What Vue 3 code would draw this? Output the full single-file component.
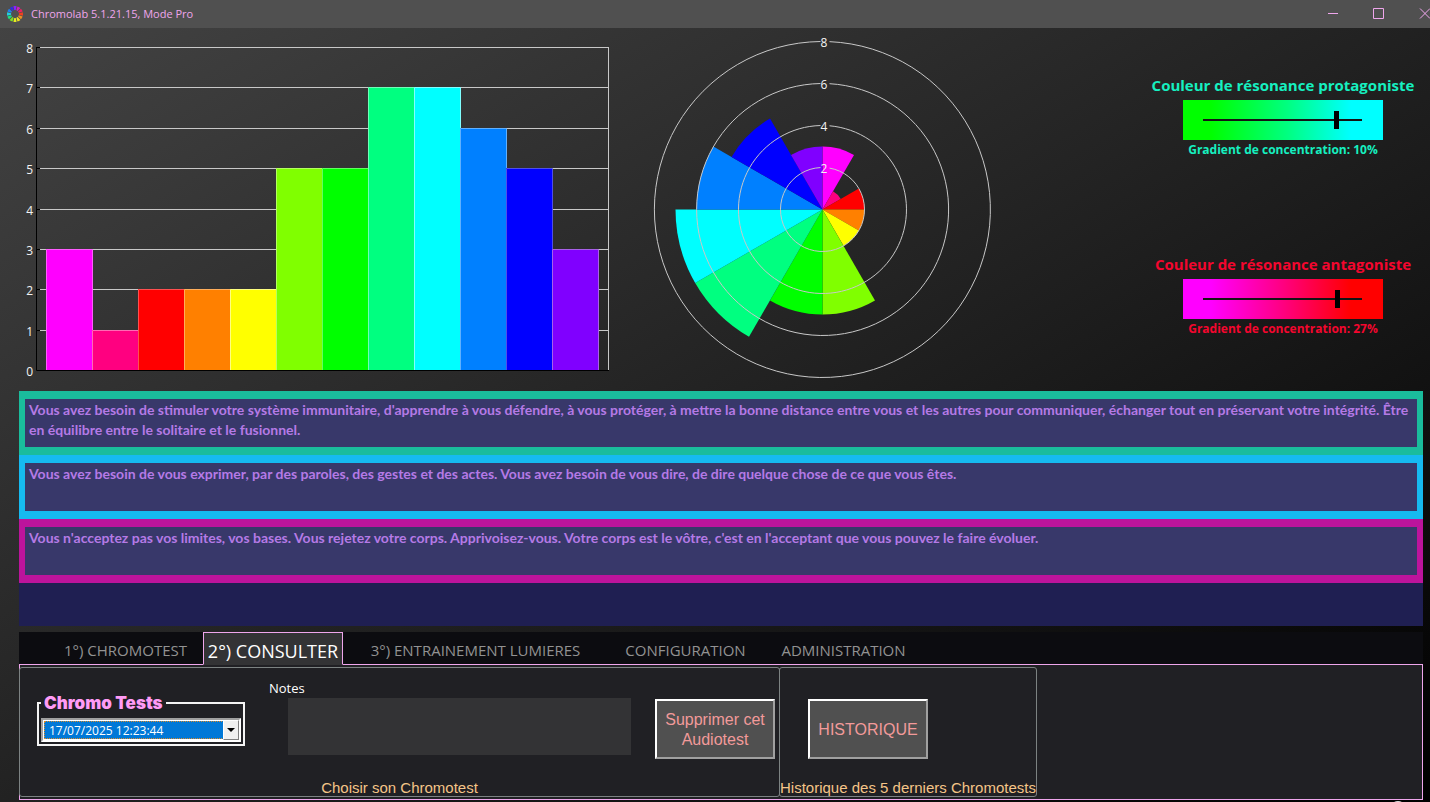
<script setup>
import { ref } from 'vue'

const series = [
  { value: 3, color: '#ff00ff', edge: '#ff5cff' },
  { value: 1, color: '#ff0080', edge: '#ff6ab4' },
  { value: 2, color: '#ff0000', edge: '#ff5050' },
  { value: 2, color: '#ff8000', edge: '#ffae5c' },
  { value: 2, color: '#ffff00', edge: '#ffff80' },
  { value: 5, color: '#80ff00', edge: '#b4ff60' },
  { value: 5, color: '#00ff00', edge: '#60ff60' },
  { value: 7, color: '#00ff80', edge: '#70ffb8' },
  { value: 7, color: '#00ffff', edge: '#80ffff' },
  { value: 6, color: '#0080ff', edge: '#60b0ff' },
  { value: 5, color: '#0000ff', edge: '#5050e8' },
  { value: 3, color: '#8000ff', edge: '#a860e8' },
]

const levels = [0, 1, 2, 3, 4, 5, 6, 7, 8]
const levelY = (v) => Math.round(342 - v * 40.375) + 0.5
const barWidth = 46
const bars = series.map((s, i) => ({
  ...s,
  x: 46 + i * barWidth,
  y: levelY(s.value),
  height: 342 - levelY(s.value),
}))

const cx = 182.5
const cy = 181.5
const unit = 21
const point = (radius, degrees, x = cx, y = cy) => {
  const a = (degrees * Math.PI) / 180
  return `${(x + radius * Math.sin(a)).toFixed(2)} ${(y - radius * Math.cos(a)).toFixed(2)}`
}
const sectors = series.map((s, i) => {
  const r = s.value * unit
  return {
    color: s.color,
    d: `M${cx} ${cy}L${point(r, i * 30)}A${r} ${r} 0 0 1 ${point(r, i * 30 + 30)}Z`,
  }
})
const rings = [2, 4, 6, 8].map((v) => {
  const r = v * unit
  const start = (Math.asin(7 / r) * 180) / Math.PI
  const end = 360 - (Math.asin(2 / r) * 180) / Math.PI
  return { v, y: cy - r, d: `M${point(r, start)}A${r} ${r} 0 1 1 ${point(r, end)}` }
})

const logoColors = ['#8a20ff', '#d020c0', '#f02060', '#f04020', '#f09020', '#f0e020', '#e8f020', '#80e020', '#20e080', '#20d0e0', '#2080f0', '#3030e0']
const logo = logoColors.map((color, i) => ({
  color,
  d: `M${point(8, i * 30 - 12, 8, 8)}A8 8 0 0 1 ${point(8, i * 30 + 12, 8, 8)}L${point(4, i * 30 + 10, 8, 8)}L${point(4, i * 30 - 10, 8, 8)}Z`,
}))

const resonances = ref([
  { id: 'protagoniste', title: 'Couleur de résonance protagoniste', position: 85, percent: 10 },
  { id: 'antagoniste', title: 'Couleur de résonance antagoniste', position: 86, percent: 27 },
])

const messages = [
  { tone: 'green', text: "Vous avez besoin de stimuler votre système immunitaire, d'apprendre à vous défendre, à vous protéger, à mettre la bonne distance entre vous et les autres pour communiquer, échanger tout en préservant votre intégrité. Être en équilibre entre le solitaire et le fusionnel." },
  { tone: 'blue', text: 'Vous avez besoin de vous exprimer, par des paroles, des gestes et des actes. Vous avez besoin de vous dire, de dire quelque chose de ce que vous êtes.' },
  { tone: 'pink', text: "Vous n'acceptez pas vos limites, vos bases. Vous rejetez votre corps. Apprivoisez-vous. Votre corps est le vôtre, c'est en l'acceptant que vous pouvez le faire évoluer." },
]

const tabs = [
  { id: 'test', label: '1°) CHROMOTEST' },
  { id: 'consult', label: '2°) CONSULTER' },
  { id: 'training', label: '3°) ENTRAINEMENT LUMIERES' },
  { id: 'config', label: 'CONFIGURATION' },
  { id: 'admin', label: 'ADMINISTRATION' },
]
const activeTab = ref('consult')
const notes = ref('')
const selectedTest = ref('17/07/2025 12:23:44')
</script>

<template>
  <div class="window">
    <header class="titlebar">
      <svg class="logo" viewBox="0 0 16 16" aria-hidden="true">
        <path v-for="(piece, i) in logo" :key="i" :d="piece.d" :fill="piece.color" />
      </svg>
      <h1>Chromolab 5.1.21.15, Mode Pro</h1>
      <div class="controls">
        <button type="button" aria-label="Réduire">
          <svg viewBox="0 0 12 12"><path d="M1 5.500H11" /></svg>
        </button>
        <button type="button" aria-label="Agrandir">
          <svg viewBox="0 0 12 12"><path d="M0.500 0.500H10.500V10.500H0.500Z" /></svg>
        </button>
        <button type="button" aria-label="Fermer">
          <svg viewBox="0 0 12 12"><path d="M1 0.500L11 10.500M11 0.500L1 10.500" /></svg>
        </button>
      </div>
    </header>

    <section class="charts">
      <svg class="chart" viewBox="0 0 640 363" role="img" aria-label="Histogramme des couleurs">
        <path v-for="v in levels.slice(1)" :key="v" class="grid" :d="`M40 ${levelY(v)}H608`" />
        <path class="grid" d="M608.5 19V342" />
        <g v-for="(bar, i) in bars" :key="i">
          <rect :x="bar.x" :y="bar.y - 0.5" :width="barWidth" :height="bar.height + 0.5" :fill="bar.color" />
          <path :d="`M${bar.x + 0.5} 342V${bar.y}H${bar.x + barWidth + 0.5}V342`" fill="none" :stroke="bar.edge" />
        </g>
        <path class="axis" d="M36.5 19V342.500H609" />
        <path v-for="v in levels" :key="`t${v}`" class="axis" :d="`M37 ${levelY(v)}H40`" />
        <text v-for="v in levels" :key="`l${v}`" class="tick" x="33" :y="levelY(v) + 5" text-anchor="end">{{ v }}</text>
      </svg>

      <svg class="chart" viewBox="0 0 496 363" role="img" aria-label="Diagramme polaire des couleurs">
        <path v-for="(sector, i) in sectors" :key="i" :d="sector.d" :fill="sector.color" />
        <g v-for="ring in rings" :key="ring.v">
          <path class="ring" :d="ring.d" />
          <text class="tick" x="184" :y="ring.y + 5" text-anchor="middle">{{ ring.v }}</text>
        </g>
      </svg>

      <div class="resonances">
        <div v-for="r in resonances" :key="r.id" class="resonance" :class="r.id">
          <label :for="r.id">{{ r.title }}</label>
          <div class="gradient">
            <input :id="r.id" v-model="r.position" type="range" min="0" max="100" />
          </div>
          <p>Gradient de concentration: {{ r.percent }}%</p>
        </div>
      </div>
    </section>

    <section class="messages">
      <p v-for="m in messages" :key="m.tone" :class="m.tone">{{ m.text }}</p>
    </section>

    <nav class="tabs" role="tablist">
      <button
        v-for="tab in tabs"
        :key="tab.id"
        type="button"
        role="tab"
        :class="[tab.id, { active: activeTab === tab.id }]"
        :aria-selected="activeTab === tab.id"
        @click="activeTab = tab.id"
      >{{ tab.label }}</button>
    </nav>

    <main class="panel">
      <section class="group choose">
        <div class="tools">
          <fieldset>
            <legend>Chromo Tests</legend>
            <div class="combo">
              <select v-model="selectedTest" aria-label="Chromo Tests">
                <option>17/07/2025 12:23:44</option>
              </select>
              <span class="drop" aria-hidden="true"><svg viewBox="0 0 8 4"><path d="M0 0H8L4 4Z" /></svg></span>
            </div>
          </fieldset>
          <div class="notes">
            <label for="notes">Notes</label>
            <textarea id="notes" v-model="notes"></textarea>
          </div>
          <button type="button" class="action">Supprimer cet Audiotest</button>
        </div>
        <h2>Choisir son Chromotest</h2>
      </section>
      <section class="group history">
        <div class="tools">
          <button type="button" class="action">HISTORIQUE</button>
        </div>
        <h2>Historique des 5 derniers Chromotests</h2>
      </section>
    </main>
    <span class="knob" aria-hidden="true"></span>
  </div>
</template>

<style>
body {
  margin: 0;
  background: #000;
}
</style>

<style scoped>
* {
  box-sizing: border-box;
}
h1, h2, p {
  margin: 0;
  font-weight: 400;
}
.window {
  position: relative;
  display: flex;
  flex-direction: column;
  min-height: 100vh;
  overflow: hidden;
  background: linear-gradient(to bottom right, #444 0%, #000 100%);
  font-family: "Open Sans", "Noto Sans", sans-serif;
  color: #fff;
}
button {
  cursor: pointer;
}
.titlebar {
  display: flex;
  align-items: center;
  height: 28px;
  padding-left: 7px;
  background: #505050;
  color: #efa6ec;
}
.logo {
  width: 16px;
  height: 16px;
}
.titlebar h1 {
  flex: 1;
  margin-left: 8px;
  font-size: 11px;
  line-height: 16px;
}
.controls {
  display: flex;
  margin-right: -18px;
}
.controls button {
  width: 46px;
  height: 28px;
  padding: 0;
  border: 0;
  background: none;
}
.controls svg {
  display: block;
  width: 12px;
  height: 12px;
  margin: 0 auto;
  fill: none;
  stroke: #efa6ec;
}
.charts {
  display: grid;
  grid-template-columns: 640fr 496fr 294px;
}
.chart {
  display: block;
  width: 100%;
}
.grid, .ring {
  fill: none;
  stroke: #c8c8c8;
}
.axis {
  fill: none;
  stroke: #000;
}
.tick {
  fill: #f4f4f4;
  font-size: 12px;
}
.resonances {
  display: flex;
  flex-direction: column;
  gap: 92px;
  padding-top: 45px;
}
.resonance {
  display: flex;
  flex-direction: column;
  align-items: center;
  font-weight: 700;
}
.resonance label {
  font-size: 15px;
  line-height: 24px;
  white-space: nowrap;
}
.resonance p {
  font-size: 12px;
  line-height: 20px;
  font-weight: 700;
}
.resonance.protagoniste {
  color: #16f0c0;
}
.resonance.antagoniste {
  color: #f4062e;
}
.gradient {
  display: flex;
  align-items: center;
  width: 200px;
  height: 40px;
  margin-top: 3px;
  padding: 0 21px 0 20px;
}
.protagoniste .gradient {
  background: linear-gradient(to right, #0f0 14%, #00ff80 52%, #0ff 84%);
}
.antagoniste .gradient {
  background: linear-gradient(to right, #f0f 14%, #ff0080 50%, #f00 84%);
}
.gradient input {
  appearance: none;
  width: 100%;
  height: 18px;
  margin: 0;
  background: linear-gradient(#141414, #141414) center / 100% 2px no-repeat;
}
.gradient input::-webkit-slider-thumb {
  appearance: none;
  width: 5px;
  height: 18px;
  background: #000;
}
.messages {
  min-height: 235px;
  margin: 0 7px 6px 19px;
  background: #1f1f52;
}
.messages p {
  min-height: 64px;
  padding: 1px 4px;
  border: solid;
  border-width: 8px 6px;
  background: #38386a;
  color: #b57ae6;
  font-family: Lato, sans-serif;
  font-size: 14px;
  font-weight: 700;
  line-height: 20px;
}
.messages .green {
  border-color: #1abc9c;
}
.messages .blue {
  border-color: #16baf0;
}
.messages .pink {
  border-color: #bc149c;
}
.tabs {
  display: flex;
  position: relative;
  z-index: 1;
  height: 33px;
  margin: 0 7px -1px 19px;
  padding-left: 29px;
  background: #0c0c10;
}
.tabs button {
  padding: 4px 0 0;
  border: 0;
  background: none;
  color: #929292;
  font-family: "Open Sans", sans-serif;
  font-size: 15px;
  white-space: nowrap;
  border-bottom: 1px solid #efa6ec;
}
.tabs::before {
  content: "";
  width: 29px;
  margin-left: -29px;
  border-bottom: 1px solid #efa6ec;
}
.tabs::after {
  content: "";
  flex: 1;
  border-bottom: 1px solid #efa6ec;
}
.tabs .test {
  width: 155px;
}
.tabs .consult {
  width: 140px;
}
.tabs .training {
  width: 265px;
}
.tabs .config {
  width: 155px;
}
.tabs .admin {
  width: 161px;
}
.tabs .active {
  border: 1px solid #efa6ec;
  border-bottom-color: #333335;
  background: #333335;
  color: #fff;
  font-size: 18px;
}
.panel {
  display: flex;
  height: 136px;
  margin: 0 7px 2px 19px;
  padding: 2px 0;
  border: 1px solid #efa6ec;
  background: #202024;
}
.group {
  display: flex;
  flex-direction: column;
  margin-left: -1px;
  border: 1px solid #7c8282;
  border-radius: 3px;
}
.group h2 {
  color: #f5c588;
  font-family: "Liberation Sans", Arial, sans-serif;
  font-size: 15px;
  line-height: 16px;
  text-align: center;
  white-space: nowrap;
}
.tools {
  display: flex;
  flex: 1;
  align-items: flex-start;
}
.choose {
  flex: 0 1 761px;
}
.choose .tools {
  gap: 24px;
  padding: 0 4px 0 17px;
}
.history {
  flex: 0 0 256px;
}
.history .tools {
  padding-left: 28px;
}
fieldset {
  width: 208px;
  margin: 25px 0 0;
  padding: 5px 2px 2px;
  border: 2px solid #f4f4f4;
}
legend {
  padding: 0 3px;
  color: #ff9bf5;
  font-family: Inter, "DejaVu Sans", sans-serif;
  font-size: 17px;
  font-weight: 900;
  line-height: 20px;
}
.combo {
  display: flex;
  position: relative;
  height: 24px;
  padding: 1px;
  border: 2px solid;
  border-color: #a0a0a0 #fff #fff #a0a0a0;
  background: #fff;
}
.combo select {
  flex: 1;
  width: 100%;
  padding: 0 20px 2px 4px;
  appearance: none;
  border: 1px dotted #d98a2a;
  border-radius: 0;
  background: #0078d7;
  color: #fff;
  font-family: "Open Sans", sans-serif;
  font-size: 12px;
}
.drop {
  display: grid;
  position: absolute;
  top: 0;
  right: 0;
  bottom: 0;
  width: 16px;
  place-items: center;
  border: 1px solid;
  border-color: #fff #808080 #808080 #fff;
  background: #f0f0f0;
  pointer-events: none;
}
.drop svg {
  width: 8px;
  height: 4px;
}
.notes {
  flex: 1;
  margin-top: 11px;
}
.notes label {
  display: block;
  height: 19px;
  font-size: 13px;
  line-height: 18px;
}
.notes textarea {
  display: block;
  width: calc(100% - 19px);
  height: 57px;
  margin-left: 19px;
  padding: 4px;
  border: 0;
  background: #333335;
  color: #fff;
  resize: none;
}
.action {
  flex: none;
  width: 120px;
  height: 60px;
  margin-top: 31px;
  padding: 2px 4px 0;
  border: 2px solid;
  border-color: #fff #a0a0a0 #a0a0a0 #fff;
  background: #505050;
  color: #f29a9a;
  font-family: "Liberation Sans", Arial, sans-serif;
  font-size: 16px;
  line-height: 20px;
}
.knob {
  position: absolute;
  right: 24px;
  bottom: -15px;
  width: 16px;
  height: 16px;
  border-radius: 50%;
  background: #ddd;
}
</style>
